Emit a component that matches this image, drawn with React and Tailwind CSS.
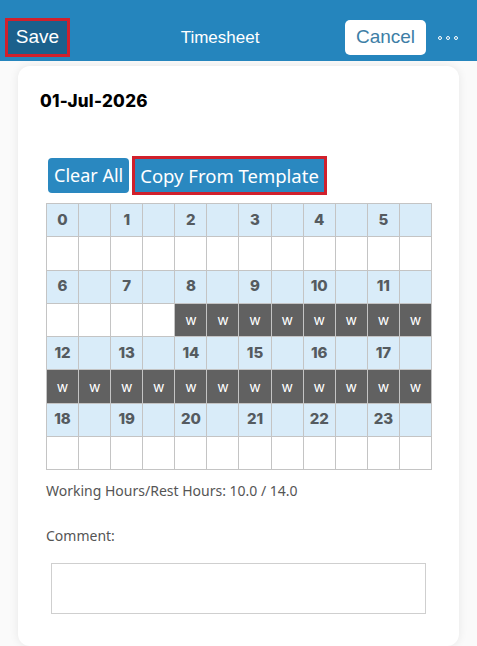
import React from 'react';

const hours = Array.from({ length: 24 }, (_, i) => i);

// hours 8-17 are worked, rest blank
const isWorked = (slot) => {
  const h = Math.floor(slot / 2);
  return h >= 8 && h <= 17;
};

const GridBlock = ({ start }) => {
  const hrs = hours.slice(start, start + 6);
  return (
    <>
      {hrs.map((h) => (
        <React.Fragment key={`h${h}`}>
          <div className="h-[33.25px] border-r border-b border-[#c4c4c4] bg-[#d9ecf9] flex items-center justify-center text-[15px] font-extrabold text-[#555b60]">
            {h}
          </div>
          <div className="h-[33.25px] border-r border-b border-[#c4c4c4] bg-[#d9ecf9]" />
        </React.Fragment>
      ))}
      {hrs.flatMap((h) => [h * 2, h * 2 + 1]).map((slot) =>
        isWorked(slot) ? (
          <div
            key={`s${slot}`}
            className="h-[33.25px] border-r border-b border-[#c4c4c4] bg-[#616161] flex items-center justify-center text-[14px] text-white"
          >
            w
          </div>
        ) : (
          <div key={`s${slot}`} className="h-[33.25px] border-r border-b border-[#c4c4c4] bg-white" />
        )
      )}
    </>
  );
};

const App = () => {
  return (
    <div className="w-[477px] h-[646px] overflow-hidden bg-[#fafafa] flex flex-col" style={{ fontFamily: '"Noto Sans", sans-serif' }}>
      <div className="h-[61px] shrink-0 bg-[#2585bd] relative flex items-center px-[5px] pt-[14px]">
        <button className="h-[39px] w-[65px] border-[3px] border-[#d0202c] bg-[#1b608c] text-white text-[19px] flex items-center justify-center" style={{ fontFamily: '"Liberation Sans", sans-serif' }}>
          Save
        </button>
        <div className="flex-1 text-center text-white text-[17px] pl-[25px]" style={{ fontFamily: '"Liberation Sans", sans-serif' }}>
          Timesheet
        </div>
        <button className="h-[35px] w-[81px] rounded-[5px] bg-white text-[#3d7ea6] text-[19px]" style={{ fontFamily: '"Liberation Sans", sans-serif' }}>
          Cancel
        </button>
        <div className="flex items-center gap-[4px] ml-[12px] mr-[14px]">
          <span className="w-[4px] h-[4px] rounded-full border border-white" />
          <span className="w-[4px] h-[4px] rounded-full border border-white" />
          <span className="w-[4px] h-[4px] rounded-full border border-white" />
        </div>
      </div>

      <div className="mx-[18px] mt-[5px] flex-1 bg-white rounded-[12px] shadow-[0_0_10px_rgba(0,0,0,0.08)] pt-[24px] px-[22px]">
        <div className="text-[17px] font-extrabold text-black leading-[22px] tracking-[0.3px]" style={{ fontFamily: 'Inter, sans-serif' }}>01-Jul-2026</div>

        <div className="mt-[44px] flex items-center gap-[3px] pl-[8px]">
          <button className="h-[35px] px-[6px] rounded-[4px] bg-[#2a88c0] text-white text-[18px]">Clear All</button>
          <button className="h-[39px] px-[5px] border-[3px] border-[#d0202c] bg-[#2a88c0] text-white text-[18.5px]">
            Copy From Template
          </button>
        </div>

        <div className="mt-[8px] ml-[6px] w-[386px] grid grid-cols-12 border-l border-t border-[#c4c4c4]" style={{ fontFamily: 'Inter, sans-serif' }}>
          <GridBlock start={0} />
          <GridBlock start={6} />
          <GridBlock start={12} />
          <GridBlock start={18} />
        </div>

        <div className="mt-[10px] ml-[6px] text-[14px] text-[#555]">Working Hours/Rest Hours: 10.0 / 14.0</div>
        <div className="mt-[24px] ml-[6px] text-[14px] text-[#555]">Comment:</div>
        <textarea className="mt-[17px] ml-[11px] w-[375px] h-[51px] border border-[#cfcfcf] resize-none outline-none block" />
      </div>
    </div>
  );
};

export default App;
